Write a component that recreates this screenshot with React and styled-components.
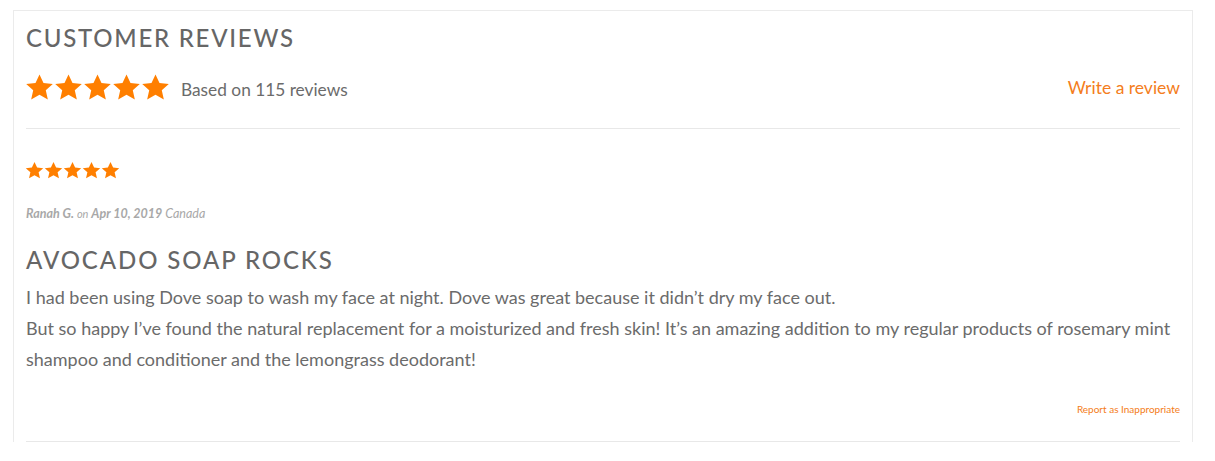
import React from 'react';
import styled, { createGlobalStyle } from 'styled-components';

const GlobalStyle = createGlobalStyle`
    body {
        margin: 0;
        background: #fff;
        font-family: "Lato", "Liberation Sans", sans-serif;
    }
`

const Wrap = styled.div`
    padding: 10px 22px 0 13px;
`
const Box = styled.div`
    border: 1px solid #ebebeb;
    border-bottom: none;
    padding: 12px 12px 0 12px;
    color: #6b6b6b;
`
const Title = styled.h2`
    margin: 0;
    font-size: 24px;
    font-weight: 500;
    letter-spacing: 1.75px;
    color: #666;
    line-height: 30px;
`
const Summary = styled.div`
    display: flex;
    align-items: center;
    justify-content: space-between;
    padding: 20px 0 26px 0;
    border-bottom: 1px solid #e8e8e8;
`
const SummaryLeft = styled.div`
    display: flex;
    align-items: center;
    gap: 11px;
    font-size: 17.3px;
    color: #6b6b6b;
    span { padding-top: 3px; }
`
const Stars = styled.div`
    display: flex;
    margin-left: -1px;
    svg {
        width: ${p => p.size}px;
        height: ${p => p.size}px;
        display: block;
    }
`
const Link = styled.a`
    text-decoration: none;
    color: #f47d20;
    font-size: ${p => p.size}px;
`
const Review = styled.div`
    padding: 32px 0 25px 0;
    border-bottom: 1px solid #e8e8e8;
`
const Meta = styled.div`
    margin-top: 26px;
    font-size: 12.5px;
    font-style: italic;
    color: #a8a8a8;
    b { font-weight: 700; }
    small { font-size: 11px; }
`
const ReviewTitle = styled.h3`
    margin: 24px 0 0 0;
    font-size: 24px;
    font-weight: 500;
    letter-spacing: 1.9px;
    color: #666;
    line-height: 30px;
`
const Body = styled.p`
    margin: 7px 0 0 0;
    font-size: 18px;
    line-height: 31px;
    color: #6b6b6b;
`
const Report = styled.div`
    text-align: right;
    margin-top: 25px;
    line-height: 14px;
`

const Star = () => (
    <svg viewBox="0 0 24 24">
        <path fill="#ff7f00" d="M12 1.2l3.3 7.1 7.7.8-5.8 5.2 1.7 7.6L12 18l-6.9 3.9 1.7-7.6L1 9.1l7.7-.8z" />
    </svg>
)

const StarRow = ({ size }) => (
    <Stars size={size}>
        {[0, 1, 2, 3, 4].map(i => <Star key={i} />)}
    </Stars>
)

const App = () => (
    <Wrap>
        <GlobalStyle />
        <Box>
            <Title>CUSTOMER REVIEWS</Title>
            <Summary>
                <SummaryLeft>
                    <StarRow size={29} />
                    <span>Based on 115 reviews</span>
                </SummaryLeft>
                <Link href="#" size={17.5}>Write a review</Link>
            </Summary>
            <Review>
                <StarRow size={19} />
                <Meta>
                    <b>Ranah G.</b> <small>on</small> <b>Apr 10, 2019</b> Canada
                </Meta>
                <ReviewTitle>AVOCADO SOAP ROCKS</ReviewTitle>
                <Body>
                    I had been using Dove soap to wash my face at night. Dove was great because it didn’t dry my face out.<br />
                    But so happy I’ve found the natural replacement for a moisturized and fresh skin! It’s an amazing addition to my regular products of rosemary mint shampoo and conditioner and the lemongrass deodorant!
                </Body>
                <Report>
                    <Link href="#" size={10}>Report as Inappropriate</Link>
                </Report>
            </Review>
        </Box>
    </Wrap>
)

export default App;
